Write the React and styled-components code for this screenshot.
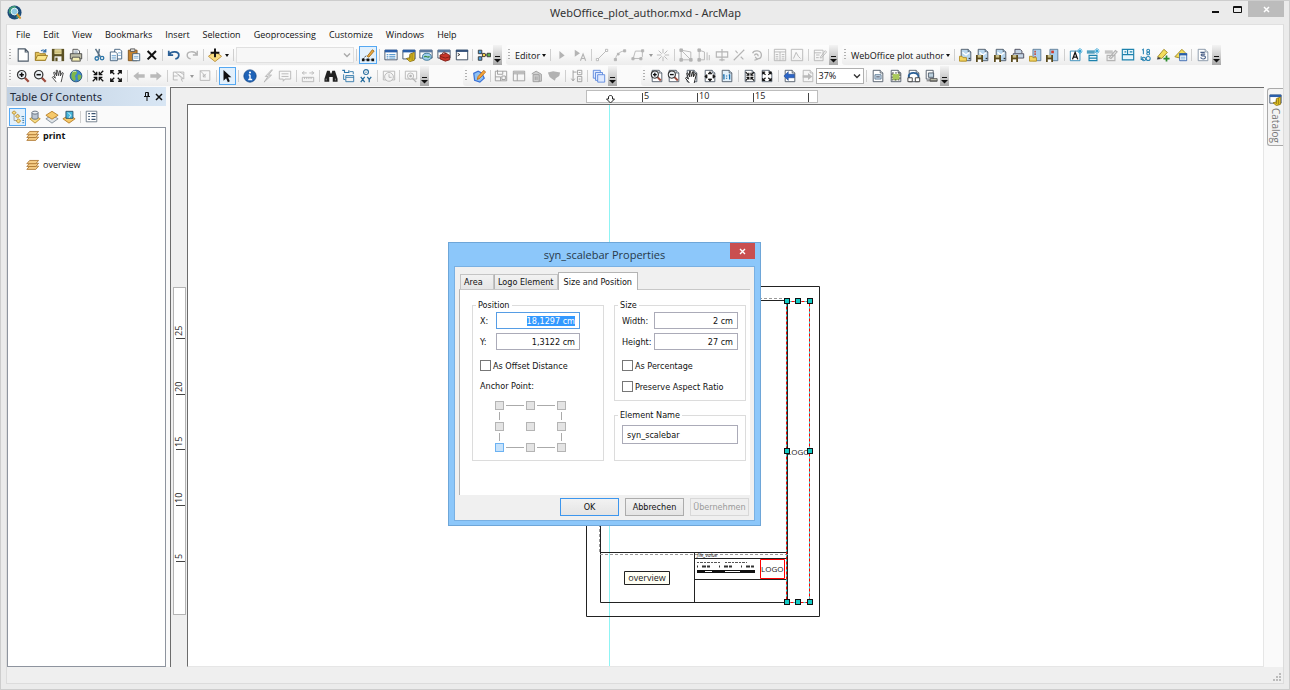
import React, { useEffect, useRef, useState } from "react";
import styled, { createGlobalStyle, css } from "styled-components";

const GlobalStyle = createGlobalStyle`
  * {
    box-sizing: border-box;
  }
  body {
    margin: 0;
    font-family: "Open Sans", "Noto Sans", sans-serif;
    font-size: 9px;
    color: #111;
  }
  button, input, select {
    font: inherit;
    color: inherit;
    margin: 0;
  }
`;

const dialogFont = `"DejaVu Sans Condensed", "DejaVu Sans", sans-serif`;

/* ---------- icons (16 x 16) ---------- */

const G = "#b4b4b4";
const sheet = "M2.5 1.5h8l3 3v10h-11z";

function Sheet({ stroke = "#4a5663", fill = "#fff" }) {
  return (
    <g fill={fill} stroke={stroke}>
      <path d={sheet} />
      <path d="M10.5 1.5v3h3" />
    </g>
  );
}

function Lens({ children, ink = "#333", glass = "#eef3f7", grip = "#9c4a3c" }) {
  return (
    <g>
      <path d="M10 10l4.5 4.5" stroke={grip} strokeWidth="2.6" />
      <circle cx="6.5" cy="6.5" r="4.8" fill={glass} stroke={ink} strokeWidth="1.4" />
      <g stroke="#111" strokeWidth="1.8">{children}</g>
    </g>
  );
}

function Disk() {
  return (
    <g>
      <path d="M0 8h8v8H0z" fill="#5a4a1c" />
      <path d="M2 8h4v3H2z" fill="#c9bd86" />
      <path d="M2 13h4v3H2z" fill="#fff" />
    </g>
  );
}

function Folder() {
  return <path d="M.5 9.500h3l1 1.500h4v4h-8z" fill="#f3d560" stroke="#b08a1e" />;
}

function Cells({ ink = "#333" }) {
  return (
    <g fill="none" stroke={ink}>
      <path d="M1.500 2.500h13v11h-13zM1.500 5.500h13M6 5.500v8" />
    </g>
  );
}

const arrowsIn = "M2 2l4 4M3 6.500h3.500V3M14 2l-4 4M13 6.500H9.500V3M2 14l4-4M3 9.500h3.500V13M14 14l-4-4M13 9.500H9.500V13";
const arrowsOut = "M6 6L2 2M2 5.500V2h3.500M10 6l4-4M14 5.500V2h-3.500M6 10l-4 4M2 10.500V14h3.500M10 10l4 4M14 10.500V14h-3.500";
const hand = "M6 15L1.500 9.500l1-1L5 10.500 3 4l1.200-.5L6.500 8 6 1.500h1.300L8.500 7.500 9.800 2l1.200.2-.4 5.800L12.800 4l1.200.6L12.500 11 11.500 15";

const icons = {
  new: <path d="M2.500 1h8l3.500 3.500V15h-11.500zM10.500 1v3.500H14" fill="#fff" stroke="#4c5a68" strokeWidth="1.2" />,
  open: (
    <g stroke="#96741c">
      <path d="M1.500 14V5h4l1.500 1.500h6V14z" fill="#e3c35a" />
      <path d="M1.500 14l2.500-5.500h11.500L13 14z" fill="#fbe68c" />
      <path d="M8 3.500c2-2 4-1.500 5 .5M13.500 1v3.500H10" fill="none" stroke="#2f6aa5" strokeWidth="1.3" />
    </g>
  ),
  save: (
    <g>
      <path d="M1 1h14v14H1z" fill="#5b5124" />
      <path d="M4 1.500h8V7H4z" fill="#efe6b6" />
      <path d="M4 9.500h8V15H4z" fill="#f5f5f5" />
      <path d="M5 11h2.500v4H5z" fill="#5b5124" />
      <path d="M4 3.500h8M4 5.500h8" stroke="#b8a855" />
    </g>
  ),
  print: (
    <g stroke="#444">
      <path d="M4.500 7V1.500h5.500l2 2V7" fill="#fff" />
      <path d="M1.500 6.500h13v6h-13z" fill="#bdbda8" />
      <path d="M4 10.500h8l1 4.500H3z" fill="#f6efb4" />
      <path d="M6 3.500h4M6 5.500h4" stroke="#8899aa" />
    </g>
  ),
  cut: (
    <g fill="none">
      <path d="M4 1l5.500 9M8.500 1L7 10" stroke="#5c7386" strokeWidth="1.7" />
      <circle cx="5.500" cy="12" r="2" stroke="#2a75a8" strokeWidth="1.5" />
      <circle cx="11.500" cy="11.500" r="2" stroke="#2a75a8" strokeWidth="1.5" />
    </g>
  ),
  copy: (
    <g fill="#fff" stroke="#3c5a78">
      <path d="M6.500 1.500h6l2 2v9h-8z" />
      <path d="M1.500 4.500h6l2 2v8h-8z" />
      <path d="M3 8.500h5M3 10.500h5M3 12.500h5M10.500 5.500h3M10.500 8.500h3" stroke="#6ba3d0" />
    </g>
  ),
  paste: (
    <g>
      <path d="M1.500 2.500h10v12h-10z" fill="#c4822e" stroke="#7c501a" />
      <path d="M4 1h5v3H4z" fill="#dcdcdc" stroke="#555" />
      <path d="M6.500 6.500h8v8h-8z" fill="#fff" stroke="#3c5a78" />
      <path d="M8 9.500h5M8 11.500h5" stroke="#6ba3d0" />
    </g>
  ),
  remove: <path d="M3 3.500l9.500 9.500M12.500 3.500L3 13" stroke="#111" strokeWidth="2.4" />,
  undo: <path d="M2 3v5h5M2.500 7.500C5 3 13.500 3.500 13.500 8c0 2.500-1.500 4-4 4.500" fill="none" stroke="#2a5f96" strokeWidth="2" />,
  redo: <path d="M14 3v5H9M13.500 7.500C11 3 2.500 3.500 2.500 8c0 2.500 1.500 4 4 4.500" fill="none" stroke={G} strokeWidth="1.600" />,
  add: (
    <g>
      <path d="M8 3.500l7.500 6L8 15.500.5 9.500z" fill="#f7dc82" stroke="#b98a30" />
      <path d="M8 .5v10M3 5.500h10" stroke="#111" strokeWidth="2.200" />
    </g>
  ),
  editorTools: (
    <g>
      <path d="M2.500 12.500L6 8.500M2 13.500h12" stroke="#333" strokeDasharray="2 1" />
      <path d="M7 9.500l6-7.500 2 1.500-6 7z" fill="#f0a83c" stroke="#9b6d1a" />
      <path d="M1 12h3v3H1zM6.500 12h3v3h-3zM12 12h3v3h-3z" fill="#111" />
    </g>
  ),
  table: (
    <g>
      <path d="M1 2.500h14v11H1z" fill="#fff" stroke="#3a4c63" />
      <path d="M1 2h14v3H1z" fill="#2a5ea9" />
      <path d="M3 7.500h2M6 7.500h7M3 9.500h2M6 9.500h7M3 11.500h2M6 11.500h7" stroke="#3b86c5" />
    </g>
  ),
  catalog: (
    <g>
      <path d="M1 2.500h14v10H1z" fill="#fff" stroke="#3a4c63" />
      <path d="M1 2h14v3H1z" fill="#2a5ea9" />
      <path d="M5 12l4-1V7l5-2v9l-5 1.500z" fill="#e4c422" stroke="#8a7010" />
      <path d="M9 8.500v5M11.500 6v8" stroke="#8a7010" />
    </g>
  ),
  search: (
    <g>
      <path d="M1 2.500h14v9H1z" fill="#fff" stroke="#3a4c63" />
      <path d="M1 2h14v3H1z" fill="#5a78a0" />
      <ellipse cx="9" cy="10" rx="5" ry="4" fill="#9fd0ee" stroke="#2f6b90" />
      <path d="M6 10.500c2-3 4 2 6-1" stroke="#3d8b3d" strokeWidth="1.5" fill="none" />
    </g>
  ),
  toolbox: (
    <g>
      <path d="M1 2.500h14v9H1z" fill="#fff" stroke="#3a4c63" />
      <path d="M1 2h14v3H1z" fill="#5a78a0" />
      <path d="M3.500 8l7-2 4 2.500v5l-5 1.500-6-2.500z" fill="#c8352a" stroke="#7c1b14" />
      <path d="M6 7c0-2.500 4-3 4-.5M3.500 9.500l6 2 5-1.500" fill="none" stroke="#7c1b14" />
    </g>
  ),
  python: (
    <g>
      <path d="M1.500 2.500h13v11h-13z" fill="#fff" stroke="#2c3d52" />
      <path d="M1 2h14v2.500H1z" fill="#33507a" />
      <path d="M3 6l2.500 1.500L3 9" fill="none" stroke="#222" />
    </g>
  ),
  model: (
    <g stroke="#333">
      <path d="M4 4.500l4 3.500h4M4 12l4-4" fill="none" />
      <path d="M1.500 2.500h4v4h-4zM1.500 10h4v4h-4z" fill="#4ea0dc" />
      <circle cx="8" cy="8" r="2" fill="#f3d24a" />
      <path d="M11.500 6h4v4h-4z" fill="#5cb050" />
    </g>
  ),
  editArrow: <path d="M5 3.500l6 5-6 4z" fill={G} />,
  editArrowA: (
    <g>
      <path d="M2 2l6 4-6 4z" fill={G} />
      <path d="M8.500 14.500L11.500 7l3 7.500M9.500 12h4" fill="none" stroke={G} strokeWidth="1.3" />
    </g>
  ),
  line: (
    <g fill="#fff" stroke={G}>
      <path d="M3 13L13 3" />
      <path d="M1.500 12h2.500v2.500H1.500zM12 1.500h2.500V4H12z" />
    </g>
  ),
  arc: (
    <g fill="none" stroke={G}>
      <path d="M3 13C3 8 8 3.500 13 3.500" />
      <path d="M1.500 12h2.500v2.500H1.500zM12 2h2.500v2.500H12zM5 6h2v2H5z" fill={G} />
    </g>
  ),
  polygon: (
    <g fill="none" stroke={G}>
      <path d="M2.500 12L5 3.500h8V10l-2 2z" />
      <path d="M12 2h2.500v2.500H12zM1 11h2.500v2.500H1zM10 11h2.500v2.500H10z" fill={G} />
    </g>
  ),
  burst: <path d="M8 1v5M8 10v5M1 8h5M10 8h5M3 3l3.500 3.500M13 3L9.500 6.500M3 13l3.500-3.500M13 13L9.500 9.500" stroke={G} />,
  vertices: (
    <g fill="none" stroke={G}>
      <path d="M2.500 2.500v11h11v-9zM2.500 2.500l11 11" />
      <path d="M1 1h3v3H1zM1 12h3v3H1zM12 12h3v3h-3z" fill={G} />
    </g>
  ),
  reshape: (
    <g fill="none" stroke={G}>
      <path d="M2.500 2.500v11h6v-9zM11.500 5v9M14 8v6" />
      <path d="M1 1h3v3H1zM1 12h3v3H1z" fill={G} />
    </g>
  ),
  cutPolygon: <path d="M1.500 4.500h13v6h-13zM8 1v14M5 13.500h6" fill="none" stroke={G} strokeWidth="1.300" />,
  split: <path d="M2 14L14 2M4 3l2.500 3M10 10l3 3" stroke={G} strokeWidth="1.300" />,
  rotate: <path d="M3 6c1-4 10-4 10 2 0 3-2.500 4.500-5 4.500M5 8.500c1-2.500 5-2 4 1M6 10l2 3-3 1" fill="none" stroke={G} strokeWidth="1.500" />,
  attributes: <path d="M1.500 1.500h13v13h-13zM1.500 4.500h13M8 4.500v10M3 7.500h3M3 10h3M3 12.500h3M10 7.500h3M10 10h3M10 12.500h3" fill="none" stroke={G} />,
  sketchProps: <path d="M1.500 1.500h13v13h-13zM4 12l3-7 2.500 4.500L12 12" fill="none" stroke={G} />,
  template: <path d="M1.500 2.500h10v12h-10zM1.500 5.500h8M3.500 8h4M3.500 11h3M8 11l6-8 1.500 1.500-6 7z" fill="none" stroke={G} />,
  zoomIn: <Lens><path d="M6.500 4v5M4 6.500h5" /></Lens>,
  zoomOut: <Lens><path d="M4 6.500h5" /></Lens>,
  pan: <path d={hand} fill="#fff" stroke="#333" />,
  globe: (
    <g>
      <circle cx="8" cy="8" r="6.700" fill="#3f87c9" stroke="#24507c" />
      <path d="M4 3c3-1.500 6-1 5 1.500S6 7.500 7 9s1 4-1 4.500C3 12 1.500 8 4 3zM11 6l3 1.500c.5 3-1.500 5-3 5.500-1-2-2-5 0-7z" fill="#7fb84a" />
      <path d="M4 3.500c2-1.500 4-1 4 0" stroke="#e9f5d4" fill="none" />
    </g>
  ),
  arrowsIn: <path d={arrowsIn} fill="none" stroke="#111" strokeWidth="1.500" />,
  arrowsOut: <path d={arrowsOut} fill="none" stroke="#111" strokeWidth="1.500" />,
  back: <path d="M1.500 8l6-5v3h7v4h-7v3z" fill="#bababa" />,
  forward: <path d="M14.500 8l-6-5v3h-7v4h7v3z" fill="#bababa" />,
  selectFeatures: (
    <g fill="none" stroke={G}>
      <path d="M1.500 3.500h12v8M1.500 3.500v9h5M4 3.500l6 6M9 3.500l4.500 3M1.500 8h5" />
      <path d="M7 6l6 5-2.500.5 1.500 3" fill="#ddd" />
    </g>
  ),
  clearSelection: <path d="M2.500 2h11v11h-11zM2.500 2l6 6M9 5.500L6 9M6 6v3h3" fill="none" stroke={G} />,
  pointer: <path d="M4 1v12.500l3-3 2 4.500 2.200-1-2-4.500H13z" fill="#111" />,
  info: (
    <g>
      <circle cx="8" cy="8" r="7" fill="#1e63b8" stroke="#164a8c" />
      <path d="M8 6.500V12M6.500 6.800H8M6 12h4.500" stroke="#fff" strokeWidth="1.600" />
      <circle cx="8" cy="4" r="1.200" fill="#fff" />
    </g>
  ),
  lightning: <path d="M12 1L5 8.500h3L3.500 15 12 7H8.500L13 1z" fill="#e4e4e4" stroke={G} />,
  popup: <path d="M1.500 2.500h13v9H8L6 14v-2.500H1.500zM4 5.500h8M4 8.500h8" fill="none" stroke={G} />,
  measure: <path d="M1.500 9.500h13v5h-13zM4 9.500v2M6.500 9.500v2M9 9.500v2M11.500 9.500v2M1.500 4.500h5M9.500 4.500h5M3.500 2.500l-2 2 2 2M12.500 2.500l2 2-2 2" fill="none" stroke={G} />,
  find: (
    <g fill="#222">
      <path d="M3.500 2h3l1 3h1l1-3h3l3 9v3.500H10V9H6v5.500H.5V11z" />
      <path d="M2.500 11v2M13 11v2" stroke="#999" />
    </g>
  ),
  route: (
    <g fill="none" stroke="#2a75a8">
      <path d="M4 4h5V1.500M1.500 1.500h2.500v3" strokeWidth="1.300" />
      <path d="M5.500 7.500h9v7h-9zM5.500 9.500h9M3 6v6h2" />
      <path d="M10 3h4v3" />
    </g>
  ),
  goToXY: (
    <g fill="none" stroke="#2a6f9f">
      <circle cx="8" cy="3.500" r="2.800" strokeWidth="1.300" />
      <path d="M8 3v1.500" />
      <path d="M2 9l4.500 6M6.500 9L2 15M9.500 9l2.200 3L14 9M11.700 12v3" strokeWidth="1.500" />
    </g>
  ),
  time: (
    <g fill="none" stroke={G}>
      <path d="M1.500 2.500h13v10h-13z" />
      <circle cx="8" cy="9" r="5" fill="#f4f4f4" />
      <path d="M8 6v3.500h3" />
    </g>
  ),
  viewer: (
    <g fill="none" stroke={G}>
      <path d="M1.500 2.500h13v9h-13z" />
      <circle cx="7.500" cy="8" r="3.500" fill="#f4f4f4" />
      <path d="M10 11l4 4M6 8h3M7.500 6.500v3" strokeWidth="1.600" />
    </g>
  ),
  mapEdit: (
    <g>
      <path d="M2 5l5-2.500 4 2 3 6-5 4.500-6-2z" fill="#8fc1f2" stroke="#3b72d8" strokeWidth="1.400" />
      <path d="M6 12l1-3.500 6.500-7 2 2-6.500 7z" fill="#f5a73a" stroke="#c06a14" />
    </g>
  ),
  pageCells: <path d="M1.500 2.500h13v11h-13zM4 1v5h6V2.500M1.500 9h6v4.500M9 8h4v4H9z" fill="none" stroke="#999" />,
  pageTable: <g><Cells ink="#999" /><path d="M2 3h12v2H2z" fill="#bbb" /></g>,
  grayBin: <path d="M3.500 6.500h7v8h-7zM2 5.500l5-3 6 3.500v8h-3M6 8.500v4M8 8.500v4" fill="#d0d0d0" stroke="#999" />,
  grayMap: <path d="M1 4l6-1.500L15 4l-1 4-4 2.500-1 3-3-2L3 9z" fill="#b2b2b2" />,
  sortPages: <path d="M3.500 1.500v12M1.500 11l2 2.500 2-2.500M3.500 3.500h4M8.500 1.500h5v5h-5zM8.500 8.500h5v6h-5zM10 4h2M10 11.500h2" fill="none" stroke="#999" />,
  stack: (
    <g fill="#dfeaff" stroke="#5a86dc">
      <path d="M1.500 1.500h8v9h-8z" />
      <path d="M4 4h8v9H4z" />
      <path d="M6.500 6.500h8v8.500h-8z" />
    </g>
  ),
  pageZoomIn: <g><Sheet /><g transform="scale(.85) translate(0 1)"><Lens><path d="M6.500 4v5M4 6.500h5" /></Lens></g></g>,
  pageZoomOut: <g><Sheet /><g transform="scale(.85) translate(0 1)"><Lens><path d="M4 6.500h5" /></Lens></g></g>,
  pagePan: <g><Sheet /><g transform="translate(-1 1)"><path d={hand} fill="#fff" stroke="#222" strokeWidth="1.100" /></g></g>,
  pageWhole: <g><Sheet /><path d="M8 3l2 2.500H6zM8 14l2-2.500H6zM2 8.500l2.500-2v4zM14 8.500l-2.500-2v4z" fill="#111" stroke="#111" /></g>,
  pageOne: <g><Sheet fill="#e4f1fb" /><path d="M4.500 6v6M3.500 7h1M11 6v6M10 7h1M7.500 7.500v1M7.500 10v1" stroke="#1b6fae" strokeWidth="1.500" /></g>,
  pageIn: <g><Sheet /><g transform="translate(1.500 2) scale(.8)"><path d={arrowsIn} fill="none" stroke="#111" strokeWidth="1.600" /></g></g>,
  pageOut: <g><Sheet /><g transform="translate(1.500 2) scale(.8)"><path d={arrowsOut} fill="none" stroke="#111" strokeWidth="1.600" /></g></g>,
  pageBack: <g><Sheet /><path d="M1 8l5-5v3h7v4H6v3z" fill="#2c66c8" stroke="#173f86" strokeWidth=".6" /></g>,
  pageForward: <g><Sheet stroke={G} fill="#f6f6f6" /><path d="M13 8.500l-5-4v2.500H2v3h6v2.500z" fill="#bababa" /></g>,
  draft: <g><Sheet /><path d="M4.500 6.500h7v5h-7z" fill="#cfe0ef" stroke="#5b7894" /><path d="M6 9h4" stroke="#334" /></g>,
  focusFrame: <g><Sheet /><path d="M4 5l4 1 4-1v7l-5 1-3-1z" fill="#a9c85a" /><path d="M3.500 4.500h9v8h-9z" fill="none" stroke="#333" strokeDasharray="2 1.500" /></g>,
  layoutSwap: <g><Sheet /><path d="M2 10V7.500C3 3.500 11 3 13 7.500V10" fill="none" stroke="#2a5f96" strokeWidth="2" /><path d="M1 10h5v4.500H1zM9.500 10h5v4.500h-5z" fill="#fff" stroke="#333" /></g>,
  pages: <g><path d="M2.500 1.500h8v10h-8z" fill="#fff" stroke="#4a5663" /><path d="M5 4.500h6v5H5z" fill="#bcd0dd" stroke="#4a5663" /><path d="M3 13.500h12M7 11h8v3H7z" fill="#c7c7b2" stroke="#555" /></g>,
  plotOpen: <g><Sheet fill="#b9d7ee" /><path d="M4 5l4 3 4-3" stroke="#fff" strokeWidth="1.500" fill="none" /><path d="M11 12h2" stroke="#333" strokeWidth="1.500" /><Folder /></g>,
  plotSave: <g><Sheet fill="#b9d7ee" /><path d="M4 5l4 3 4-3" stroke="#fff" strokeWidth="1.500" fill="none" /><path d="M11 12h2" stroke="#333" strokeWidth="1.500" /><Disk /></g>,
  plotPrint: <g><path d="M4.500 6V1.500h6l2 2V6M2.500 6.500h12v5h-12z" fill="#c4d4e4" stroke="#445" /><Disk /></g>,
  legendOpen: <g><path d="M4.500 1.500h9v13h-9z" fill="#a9d0ef" stroke="#5d7a96" /><path d="M7 3v7" stroke="#c8584a" strokeWidth="2" strokeDasharray="2 1" /><Folder /></g>,
  legendSave: <g><path d="M4.500 1.500h9v13h-9z" fill="#a9d0ef" stroke="#5d7a96" /><path d="M6 4.500h3" stroke="#d23a2a" strokeWidth="3" /><Disk /></g>,
  textNew: <g><path d="M1.500 3.500h11v11h-11z" fill="#fff" stroke="#2a85b4" /><path d="M4 13l3-8 3 8M5 10.500h4" fill="none" stroke="#111" strokeWidth="1.500" /><path d="M12.500 0v7M9.500 3.500h6M10.500 1.500l4 4M14.500 1.500l-4 4" stroke="#2a9fd4" /></g>,
  rowsNew: <g><path d="M1 3.500h9M1 5.500h9M3.500 8.500h9v6h-9zM3.500 11.500h9" fill="#e8f6fc" stroke="#1d82ad" strokeWidth="1.300" /><path d="M12.500 0v7M9.500 3.500h6M10.500 1.500l4 4M14.500 1.500l-4 4" stroke="#2a9fd4" /></g>,
  rowsEdit: <path d="M1 3.500h9M1 5.500h9M3.500 8.500h9v6h-9zM6 11l7-8 2 1.500-7 7.500z" fill="#eee" stroke={G} strokeWidth="1.300" />,
  window: <g fill="#e8f6fc" stroke="#1d82ad" strokeWidth="1.300"><path d="M1.500 1.500h13v12h-13z" /><path d="M1.500 7.500h13M4 4.500h2M7.500 2v5.500M10 4.500h3" fill="none" /></g>,
  digits: <g fill="none" stroke="#2a85b4" strokeWidth="1.200"><path d="M3.500 2.500l1.500-1v5.500M2.500 9.500v3.500h3" /><circle cx="10.500" cy="3" r="1.600" /><circle cx="10.500" cy="6.300" r="1.600" /><circle cx="5.500" cy="12.500" r="2" /><circle cx="10.500" cy="12" r="2.300" /></g>,
  paintAdd: <g><path d="M2 10l7-8.500 4 3.500-6.500 7z" fill="#f2dd5e" stroke="#9c8420" /><path d="M1 13l1-3 4 2.500z" fill="#444" /><path d="M12 8.500v7M8.500 12h7" stroke="#2b8a2b" strokeWidth="2" /></g>,
  paintList: <g><path d="M1 10l8-8.500 4 4-6 6z" fill="#f2dd5e" stroke="#9c8420" /><path d="M6.500 6.500h8v8h-8z" fill="#fff" stroke="#2a5ea9" /><path d="M6 6h9v2.500H6z" fill="#2a5ea9" /><path d="M8 10.500h5M8 12.500h5" stroke="#6ba3d0" /></g>,
  refresh: <g><Sheet stroke="#8090a2" /><path d="M5 5h5M10.500 7H7c-1.500 0-1.500 2 0 2h2c2.500 0 2.500 3.500-.5 3.500-2 0-3-1-3-2" fill="none" stroke="#4a5f86" strokeWidth="1.200" /></g>,
  drawingOrder: (
    <g fill="#f7dc86" stroke="#b88a2c">
      <path d="M3.500 4v8h4M7 5l2 1" fill="none" stroke="#999" />
      <path d="M1 3l2.500-2L6 3 3.500 5zM5 7l2.500-2L10 7 7.500 9zM6 12.500L8.500 10l2.500 2.500L8.500 15z" />
      <path d="M12 7.500h3M13 10h2M13 12h2M13 14.500h2" stroke="#2a75a8" />
    </g>
  ),
  source: (
    <g>
      <path d="M2 10l6-3 6 3-6 5z" fill="#f7dc86" stroke="#b88a2c" />
      <path d="M4.500 3v6c0 2 7 2 7 0V3" fill="#bcc6d2" stroke="#5b6878" />
      <ellipse cx="8" cy="3" rx="3.500" ry="1.700" fill="#eef2f6" stroke="#5b6878" />
    </g>
  ),
  visibility: (
    <g>
      <path d="M1 10l7-4 7 4-7 5z" fill="#dfe4e8" stroke="#7e8a96" />
      <path d="M1 6l7-4.500L15 6l-7 4.500z" fill="#f6c96a" stroke="#b57b26" />
    </g>
  ),
  selection: (
    <g>
      <path d="M1 10l7-4 7 4-7 5z" fill="#f6c96a" stroke="#b57b26" />
      <path d="M4.500 1.500h8v8h-8z" fill="#49b8dc" stroke="#224d66" />
      <path d="M7 3l3 3-2 3" stroke="#fff" fill="none" />
    </g>
  ),
  options: (
    <g>
      <path d="M1.500 1.500h13v13h-13z" fill="#fff" stroke="#5b6b7b" />
      <path d="M4 4.500h2M8 4.500h5M4 8h2M8 8h5M4 11.500h2M8 11.500h5" stroke="#37516e" strokeWidth="1.400" />
    </g>
  ),
  layers: (
    <g fill="#f6cd86" stroke="#a8702a">
      <path d="M1 14L4.500 10h11L12 14z" />
      <path d="M1 10.500L4.500 6.500h11L12 10.500z" />
      <path d="M1 7L4.500 3h11L12 7z" />
    </g>
  ),
  app: (
    <g>
      <circle cx="8" cy="8" r="7.500" fill="#1b4a78" />
      <path d="M3 3c3-2.500 6-2 7-1L6 6l-3 4C1.500 8 1.500 5 3 3zM10 12l4-3c-.5 3-2 5-4 5.500z" fill="#3f9a7a" />
      <circle cx="8" cy="7" r="3.600" fill="#8cc8e0" stroke="#e8f6fa" />
      <path d="M10.500 9.500l4 5" stroke="#d8942c" strokeWidth="2" />
    </g>
  ),
};

const Svg = styled.svg`
  display: block;
  flex: none;
  fill: none;
`;

function Icon({ name, size = 14 }) {
  return (
    <Svg width={size} height={size} viewBox="0 0 16 16" aria-hidden="true">
      {icons[name]}
    </Svg>
  );
}

/* ---------- main window ---------- */

const Frame = styled.div`
  position: relative;
  display: flex;
  flex-direction: column;
  min-height: 100vh;
  padding: 0 5px 5px;
  background: #ebebeb;
  border: 1px solid #cdcdcd;
  overflow: hidden;
`;

const TitleBar = styled.header`
  display: grid;
  grid-template-columns: 1fr auto 1fr;
  align-items: center;
  height: 23px;
  padding-left: 1px;
`;

const Title = styled.h1`
  margin: 0;
  font-family: "Noto Sans", "Open Sans", sans-serif;
  font-size: 11px;
  font-weight: 400;
  color: #333;
`;

const WindowButtons = styled.div`
  display: flex;
  align-self: start;
  justify-content: flex-end;
`;

const WindowButton = styled.button`
  display: flex;
  align-items: center;
  justify-content: center;
  width: ${(props) => (props.$close ? "36px" : "22px")};
  height: 16px;
  padding: 0;
  border: 0;
  color: ${(props) => (props.$close ? "#fff" : "#111")};
  background: ${(props) => (props.$close ? "#bcbcbc" : "transparent")};
`;

const Shell = styled.div`
  flex: 1;
  display: flex;
  flex-direction: column;
  background: #fafafa;
  border: 1px solid #dcdcdc;
  border-top-color: #e0e0e0;
`;

const MenuBar = styled.nav`
  display: flex;
  gap: 13px;
  height: 20px;
  padding: 0 9px 2px;
`;

const MenuItem = styled.button`
  padding: 0;
  border: 0;
  background: none;
  font-size: 9px;
  white-space: nowrap;
`;

const ToolRow = styled.div`
  display: flex;
  gap: ${(props) => props.$gap}px;
  height: 21px;
`;

const Toolbar = styled.div`
  display: flex;
  align-items: center;
  flex: none;
  width: ${(props) => props.$width}px;
  height: 20px;
  background: linear-gradient(#fdfdfd, #f8f8f8 50%, #ececec);
  border-radius: 3px 0 0 3px;
`;

const Grip = styled.span`
  flex: none;
  width: 2px;
  height: 12px;
  margin: 0 3px 0 2px;
  background: repeating-linear-gradient(#b0b0b0 0 1px, transparent 1px 3px);
`;

const Divider = styled.span`
  flex: none;
  width: 1px;
  height: 12px;
  margin: 0 2px;
  background: #cfcfcf;
`;

const Tool = styled.button`
  display: flex;
  align-items: center;
  justify-content: center;
  flex: 1 1 18px;
  min-width: 0;
  height: 18px;
  padding: 0;
  background: none;
  border: 1px solid transparent;
  ${(props) =>
    props.$active &&
    css`
      background: #e2f0fc;
      border-color: #55a8f2;
    `}
`;

const Drop = styled.button`
  flex: none;
  display: flex;
  align-items: center;
  justify-content: center;
  gap: 2px;
  min-width: 8px;
  padding: 0 ${(props) => (props.$labelled ? "2px" : "0")};
  border: 0;
  background: none;
  font-size: 9px;
  white-space: nowrap;
  color: ${(props) => (props.$muted ? "#999" : "#111")};
  &::after {
    content: "";
    border: 2px solid transparent;
    border-top: 3px solid currentColor;
    border-bottom: 0;
  }
`;

const More = styled.button`
  flex: none;
  display: flex;
  align-items: flex-end;
  justify-content: center;
  align-self: stretch;
  width: 9px;
  padding: 0 0 2px;
  border: 0;
  background: linear-gradient(#f4f4f4, #d0d0d0 50%, #a8a8a8);
`;

const SelectBox = styled.span`
  flex: none;
  display: flex;
  align-items: center;
  position: relative;
  width: ${(props) => props.$width}px;
  height: 16px;
  background: ${(props) => (props.$muted ? "#f7f7f7" : "#fff")};
  border: 1px solid ${(props) => (props.$muted ? "#e0e0e0" : "#b0b0b0")};
  select {
    appearance: none;
    width: 100%;
    padding: 0 1px;
    border: 0;
    background: none;
    font-size: 9px;
    line-height: 14px;
  }
  svg {
    position: absolute;
    right: 2px;
    pointer-events: none;
  }
`;

function Chevron({ color }) {
  return (
    <Svg width="8" height="8" viewBox="0 0 8 8">
      <path d="M1 2.500l3 3 3-3" stroke={color} strokeWidth="1.400" />
    </Svg>
  );
}

function Overflow() {
  return (
    <More aria-label="Toolbar options">
      <Svg width="7" height="7" viewBox="0 0 7 7">
        <path d="M1 .5h5" stroke="#111" />
        <path d="M0 3h7L3.500 6.500z" fill="#111" />
      </Svg>
    </More>
  );
}

const scaleSelect = (
  <SelectBox key="zoom" $width={48}>
    <select aria-label="Zoom percent" defaultValue="37%">
      <option>37%</option>
      <option>100%</option>
    </select>
    <Chevron color="#333" />
  </SelectBox>
);

const mapScale = (
  <SelectBox key="scale" $width={118} $muted>
    <select aria-label="Map scale" disabled />
    <Chevron color="#aaa" />
  </SelectBox>
);

// "|" is a divider, "v" a small drop-down arrow and "*" marks a pressed tool
const topRow = [
  {
    width: 495,
    items: ["new", "open", "save", "print", "|", "cut", "copy", "paste", "remove", "|", "undo", "redo", "|", "add", "v", "|", mapScale, "|", "*editorTools", "|", "table", "catalog", "search", "toolbox", "python", "|", "model"],
  },
  {
    width: 332,
    items: [<Drop key="editor" $labelled>Editor</Drop>, "|", "editArrow", "editArrowA", "|", "line", "arc", "polygon", "v-", "burst", "|", "vertices", "reshape", "cutPolygon", "split", "rotate", "|", "attributes", "sketchProps", "|", "template"],
  },
  {
    width: 379,
    items: [<Drop key="plot" $labelled>WebOffice plot author</Drop>, "|", "plotOpen", "plotSave", "plotSave", "plotPrint", "legendOpen", "legendSave", "|", "textNew", "rowsNew", "rowsEdit", "window", "digits", "paintAdd", "paintList", "|", "refresh"],
  },
];

const bottomRow = [
  {
    width: 422,
    items: ["zoomIn", "zoomOut", "pan", "globe", "|", "arrowsIn", "arrowsOut", "|", "back", "forward", "|", "selectFeatures", "v-", "clearSelection", "|", "*pointer", "|", "info", "lightning", "popup", "|", "measure", "|", "find", "route", "goToXY", "|", "time", "|", "viewer"],
  },
  {
    width: 154,
    items: ["mapEdit", "|", "pageCells", "pageTable", "grayBin", "grayMap", "|", "sortPages", "|", "stack"],
  },
  {
    width: 308,
    items: ["pageZoomIn", "pageZoomOut", "pagePan", "pageWhole", "pageOne", "|", "pageIn", "pageOut", "|", "pageBack", "pageForward", scaleSelect, "|", "draft", "focusFrame", "layoutSwap", "pages"],
  },
];

function ToolStrip({ width, items }) {
  return (
    <Toolbar $width={width}>
      <Grip />
      {items.map((item, index) => {
        if (typeof item !== "string") return item;
        if (item === "|") return <Divider key={index} />;
        if (item[0] === "v" && item.length < 3) {
          return <Drop key={index} $muted={item === "v-"} aria-label="More" />;
        }
        const active = item[0] === "*";
        const name = active ? item.slice(1) : item;
        return (
          <Tool key={index} $active={active} aria-label={name}>
            <Icon name={name} />
          </Tool>
        );
      })}
      <Overflow />
    </Toolbar>
  );
}

const Workspace = styled.div`
  flex: 1;
  display: flex;
`;

/* ---------- table of contents ---------- */

const Contents = styled.aside`
  display: flex;
  flex-direction: column;
  flex: none;
  width: 159px;
`;

const PanelHead = styled.div`
  display: flex;
  align-items: center;
  height: 19px;
  padding: 0 1px 0 3px;
  background: linear-gradient(90deg, #c1d0e1, #d8e6f4);
  h2 {
    flex: 1;
    margin: 0;
    font-family: "Noto Sans", "Open Sans", sans-serif;
    font-size: 11px;
    font-weight: 400;
    color: #1f2a38;
  }
`;

const PanelButton = styled.button`
  display: flex;
  justify-content: center;
  width: 12px;
  padding: 0;
  border: 0;
  background: none;
`;

const PanelTools = styled.div`
  display: flex;
  align-items: center;
  width: 93px;
  height: 21px;
  padding-left: 2px;
`;

const Tree = styled.ul`
  flex: 1;
  margin: 0;
  padding: 0 0 0 18px;
  list-style: none;
  background: #fff;
  border: 1px solid #8e949e;
`;

const TreeItem = styled.li`
  display: flex;
  align-items: center;
  gap: 4px;
  height: 15px;
  margin-bottom: 14px;
  font-size: 9px;
  font-weight: ${(props) => (props.$bold ? 700 : 400)};
`;

/* ---------- layout view ---------- */

const LayoutView = styled.main`
  flex: 1;
  display: grid;
  grid-template-columns: 16px 1fr;
  grid-template-rows: 16px 1fr;
  margin-left: 4px;
  background: #efefef;
  border-top: 1px solid #6c6c6c;
  border-left: 1px solid #6c6c6c;
  min-width: 0;
`;

const RulerCorner = styled.span`
  border-bottom: 1px solid #efefef;
`;

const Canvas = styled.div`
  background: #fff;
  border: 1px solid #6c6c6c;
  border-right-color: #e6e6e6;
  border-bottom-color: #e6e6e6;
  overflow: hidden;
  svg {
    width: 100%;
    height: 100%;
  }
`;

const RulerSvg = styled(Svg)`
  width: 100%;
  height: 100%;
  overflow: hidden;
  text {
    font-size: 9px;
    fill: #222;
  }
`;

function HorizontalRuler() {
  return (
    <RulerSvg>
      <rect x="399.5" y="2.5" width="231" height="12" fill="#fff" stroke="#bdbdbd" />
      <path d="M455.5 5v9M510.500 5v9M566.500 5v9M621.500 5v9" stroke="#444" />
      <text x="457" y="11">5</text>
      <text x="512" y="11">10</text>
      <text x="568" y="11">15</text>
      <path d="M421.500 10V9c0-2 4-2 4 0v2h2l-4 4-4-4h2z" fill="#fff" stroke="#222" />
    </RulerSvg>
  );
}

const verticalTicks = [
  [25, 234],
  [20, 290],
  [15, 345],
  [10, 401],
  [5, 457],
];

function VerticalRuler() {
  return (
    <RulerSvg>
      <rect x="2.5" y="183.500" width="12" height="327" fill="#fff" stroke="#b4b4b4" />
      {verticalTicks.map(([label, y]) => (
        <g key={label}>
          <path d={`M5 ${y}.5h9`} stroke="#444" />
          <text transform={`translate(11 ${y - 2}) rotate(-90)`}>{label}</text>
        </g>
      ))}
    </RulerSvg>
  );
}

function MapLayout() {
  const handles = [200, 211, 223].flatMap((x) => [15, 165, 316].map((y) => [x, y]));
  return (
    <Svg>
      <g transform="translate(398 181)">
        <path d="M23.5 -182V1200" stroke="#8ff4f4" />
        <g stroke="#222">
          <path d="M.5 .5h233v330H.5z" />
          <path d="M14.500 14.500h187v302h-187zM14.500 266.500h187M108.500 266v50M108.500 272.500h93M108.500 293.500h93" />
          <path d="M13 12.500h188M13.500 13v255M14 268.500h188" stroke="#999" strokeDasharray="3 2" />
          <path d="M38.500 285.500h45v13h-45z" fill="#fffff4" />
        </g>
        <text x="61" y="295" fontSize="9" textAnchor="middle" fill="#222">overview</text>
        <text x="111" y="271" fontSize="5" fontStyle="italic" fill="#111">file_value</text>
        <path d="M111 276.500h24M139 276.500h22" stroke="#555" strokeDasharray="2 1 3 1" />
        <path d="M111 280.500h58" stroke="#333" strokeWidth="2" strokeDasharray="1 4 4 1 3 9" />
        <path d="M111 285.500h58" stroke="#111" strokeWidth="3" />
        <path d="M119 285.500h7M139 285.500h15" stroke="#fff" />
        <path d="M174.500 273.500h24v19h-24z" fill="#fff" stroke="#ff0000" />
        <text x="175" y="286" fontSize="8" fill="#222">LOGO</text>
        <path d="M200.500 15.500h23v301h-23z" stroke="#20e8e8" />
        <path d="M200.500 15.500h23v301h-23z" stroke="#ff0000" strokeDasharray="3 2" />
        <text x="201" y="169" fontSize="8" fill="#222">LOGO</text>
        <g fill="#12c9c4" stroke="#111">
          {handles
            .filter(([x, y]) => !(x === 211 && y === 165))
            .map(([x, y]) => (
              <rect key={`${x}-${y}`} x={x - 1.5} y={y - 2.5} width="5" height="5" />
            ))}
        </g>
      </g>
    </Svg>
  );
}

const SideStrip = styled.aside`
  flex: none;
  width: 19px;
  padding-top: 1px;
`;

const SideTab = styled.button`
  display: flex;
  align-items: center;
  gap: 2px;
  height: 58px;
  width: 16px;
  margin-left: 3px;
  padding: 4px 0;
  writing-mode: vertical-rl;
  font-size: 10px;
  color: #777;
  background: #f4f4f4;
  border: 1px solid #aaa;
  border-right: 0;
  border-radius: 3px 0 0 3px;
`;

const StatusBar = styled.footer`
  display: flex;
  align-items: flex-end;
  justify-content: flex-end;
  height: 16px;
  padding: 2px;
  background: #efefef;
`;

/* ---------- properties dialog ---------- */

const Dialog = styled.section`
  position: absolute;
  left: 447px;
  top: 241px;
  width: 313px;
  padding: 0 5px 4px;
  font-family: ${dialogFont};
  font-size: 9px;
  background: #8cc7fa;
  border: 1px solid #6ea6d8;
`;

const DialogHead = styled.div`
  display: grid;
  grid-template-columns: 25px 1fr 25px;
  align-items: center;
  height: 23px;
  text-align: center;
  h2 {
    margin: 0;
    font-family: "Open Sans", sans-serif;
    font-size: 11px;
    font-weight: 400;
    color: #27394a;
  }
`;

const DialogClose = styled.button`
  display: flex;
  align-items: center;
  justify-content: center;
  align-self: start;
  width: 25px;
  height: 16px;
  padding: 0;
  border: 0;
  background: #c94f50;
`;

const DialogBody = styled.div`
  padding: 5px 4px 4px;
  background: #f0f0f0;
  border: 1px solid #79b0e2;
`;

const Tabs = styled.div`
  display: flex;
  align-items: flex-end;
  height: 17px;
  padding-left: 1px;
`;

const Tab = styled.button`
  position: relative;
  min-width: 34px;
  height: ${(props) => (props.$active ? "18px" : "15px")};
  margin-bottom: ${(props) => (props.$active ? "-1px" : "0")};
  padding: 0 ${(props) => (props.$active ? "5px" : "3px")};
  text-align: left;
  background: ${(props) => (props.$active ? "#fff" : "linear-gradient(#f2f2f2, #e6e6e6)")};
  border: 1px solid ${(props) => (props.$active ? "#b4b4b4" : "#c4c4c4")};
  border-bottom: 0;
  white-space: nowrap;
  & + & {
    border-left: ${(props) => (props.$active ? "1px solid #b4b4b4" : "0")};
  }
`;

const TabPanel = styled.div`
  display: grid;
  grid-template-columns: 132px 132px;
  gap: 0 10px;
  height: 206px;
  padding: 10px 4px 0 12px;
  background: #fff;
  border-top: 1px solid #c8c8c8;
  border-left: 1px solid #b4b4b4;
  align-content: start;
`;

const Column = styled.div`
  display: flex;
  flex-direction: column;
  justify-content: space-between;
`;

const Group = styled.fieldset`
  min-width: 0;
  height: ${(props) => props.$height}px;
  margin: 0;
  padding: 2px 7px 0;
  border: 1px solid #dcdcdc;
  legend {
    padding: 0 2px;
    margin-left: -4px;
    line-height: 10px;
  }
`;

const Field = styled.label`
  display: flex;
  align-items: center;
  justify-content: space-between;
  height: 17px;
  margin-bottom: 4px;
  padding-right: ${(props) => (props.$inset ? "16px" : "0")};
`;

const TextBox = styled.input`
  width: ${(props) => props.$width || "84px"};
  height: ${(props) => props.$height || 17}px;
  padding: 0 4px;
  text-align: ${(props) => props.$align || "right"};
  background: #fff;
  border: 1px solid #ababb8;
  outline: 0;
  &:focus {
    border-color: #569de5;
  }
  &::selection {
    color: #fff;
    background: #3399ff;
  }
`;

const Checks = styled.div`
  padding-top: 3px;
`;

const Check = styled.label`
  display: flex;
  align-items: center;
  gap: 2px;
  height: 17px;
  margin-bottom: 4px;
  white-space: nowrap;
  input {
    appearance: none;
    flex: none;
    width: 11px;
    height: 11px;
    background: #fff;
    border: 1px solid #777;
  }
  input:checked {
    background: #3399ff;
  }
`;

const AnchorLabel = styled.p`
  margin: 0 0 6px;
  line-height: 17px;
`;

const AnchorGrid = styled.div`
  display: grid;
  grid-template-columns: repeat(3, 9px);
  justify-content: space-between;
  row-gap: 12px;
  width: 71px;
  margin-left: 15px;
  background: linear-gradient(#aaa, #aaa) 4px 4px / 62px 1px no-repeat,
    linear-gradient(#aaa, #aaa) 4px 46px / 62px 1px no-repeat,
    linear-gradient(#aaa, #aaa) 4px 4px / 1px 42px no-repeat,
    linear-gradient(#aaa, #aaa) 66px 4px / 1px 42px no-repeat;
  input {
    appearance: none;
    width: 9px;
    height: 9px;
    margin: 0;
    background: #e4e4e4;
    border: 1px solid #b4b4b4;
    outline: 2px solid #fff;
  }
  input:checked {
    background: #c6e2fb;
    border-color: #6cb2f2;
  }
`;

const Actions = styled.div`
  display: flex;
  justify-content: flex-end;
  gap: 6px;
  padding: 3px 1px 0;
`;

const Action = styled.button`
  width: 59px;
  height: 18px;
  padding: 0;
  background: linear-gradient(#f2f2f2, #e4e4e4);
  border: 1px solid ${(props) => (props.$primary ? "#3c96ee" : "#acacac")};
  &:disabled {
    color: #9a9a9a;
    background: #efefef;
    border-color: #d8d8d8;
  }
`;

const anchors = ["tl", "tc", "tr", "ml", "mc", "mr", "bl", "bc", "br"];

function PropertiesDialog() {
  const [anchor, setAnchor] = useState("bl");
  const xField = useRef(null);

  useEffect(() => {
    xField.current?.focus();
    xField.current?.select();
  }, []);

  return (
    <Dialog role="dialog" aria-labelledby="dialog-title">
      <DialogHead>
        <span />
        <h2 id="dialog-title">syn_scalebar Properties</h2>
        <DialogClose aria-label="Close dialog">
          <Svg width="7" height="7" viewBox="0 0 7 7">
            <path d="M1 1l5 5M6 1L1 6" stroke="#fff" strokeWidth="1.400" />
          </Svg>
        </DialogClose>
      </DialogHead>
      <DialogBody>
        <Tabs>
          <Tab>Area</Tab>
          <Tab>Logo Element</Tab>
          <Tab $active>Size and Position</Tab>
        </Tabs>
        <TabPanel>
          <Group $height={161}>
            <legend>Position</legend>
            <Field $inset>
              X:
              <TextBox ref={xField} defaultValue="18,1297 cm" />
            </Field>
            <Field $inset>
              Y:
              <TextBox defaultValue="1,3122 cm" />
            </Field>
            <Checks>
              <Check>
                <input type="checkbox" />
                As Offset Distance
              </Check>
            </Checks>
            <AnchorLabel>Anchor Point:</AnchorLabel>
            <AnchorGrid>
              {anchors.map((id) => (
                <input
                  key={id}
                  type="radio"
                  name="anchor"
                  aria-label={`Anchor ${id}`}
                  checked={anchor === id}
                  onChange={() => setAnchor(id)}
                />
              ))}
            </AnchorGrid>
          </Group>
          <Column>
            <Group $height={101}>
              <legend>Size</legend>
              <Field>
                Width:
                <TextBox defaultValue="2 cm" />
              </Field>
              <Field>
                Height:
                <TextBox defaultValue="27 cm" />
              </Field>
              <Checks>
                <Check>
                  <input type="checkbox" />
                  As Percentage
                </Check>
                <Check>
                  <input type="checkbox" />
                  Preserve Aspect Ratio
                </Check>
              </Checks>
            </Group>
            <Group $height={51}>
              <legend>Element Name</legend>
              <Checks>
                <TextBox aria-label="Element Name" $width="100%" $height={19} $align="left" defaultValue="syn_scalebar" />
              </Checks>
            </Group>
          </Column>
        </TabPanel>
        <Actions>
          <Action $primary>OK</Action>
          <Action>Abbrechen</Action>
          <Action disabled>Übernehmen</Action>
        </Actions>
      </DialogBody>
    </Dialog>
  );
}

const menus = ["File", "Edit", "View", "Bookmarks", "Insert", "Selection", "Geoprocessing", "Customize", "Windows", "Help"];

export default function App() {
  return (
    <Frame>
      <GlobalStyle />
      <TitleBar>
        <Icon name="app" size={15} />
        <Title>WebOffice_plot_author.mxd - ArcMap</Title>
        <WindowButtons>
          <WindowButton aria-label="Minimize">
            <Svg width="9" height="9"><path d="M1 7h7" stroke="#111" strokeWidth="2" /></Svg>
          </WindowButton>
          <WindowButton aria-label="Maximize">
            <Svg width="9" height="9"><path d="M.5 1.500h8v6h-8zM.5 2.500h8" stroke="#111" /></Svg>
          </WindowButton>
          <WindowButton $close aria-label="Close">
            <Svg width="7" height="7"><path d="M1 1l5 5M6 1L1 6" stroke="#fff" strokeWidth="1.500" /></Svg>
          </WindowButton>
        </WindowButtons>
      </TitleBar>
      <Shell>
        <MenuBar>
          {menus.map((menu) => (
            <MenuItem key={menu}>{menu}</MenuItem>
          ))}
        </MenuBar>
        <ToolRow $gap={4}>
          {topRow.map((bar) => (
            <ToolStrip key={bar.width} {...bar} />
          ))}
        </ToolRow>
        <ToolRow $gap={34}>
          <ToolStrip {...bottomRow[0]} />
          <ToolRow $gap={24}>
            <ToolStrip {...bottomRow[1]} />
            <ToolStrip {...bottomRow[2]} />
          </ToolRow>
        </ToolRow>
        <Workspace>
          <Contents>
            <PanelHead>
              <h2>Table Of Contents</h2>
              <PanelButton aria-label="Auto hide">
                <Svg width="8" height="9"><path d="M2.500 .5h3v4h-3zM1 4.500h6M4 5v4M5 1v3" stroke="#111" /></Svg>
              </PanelButton>
              <PanelButton aria-label="Close panel">
                <Svg width="8" height="8"><path d="M1 1l6 6M7 1L1 7" stroke="#111" strokeWidth="1.500" /></Svg>
              </PanelButton>
            </PanelHead>
            <PanelTools>
              <Tool $active aria-label="List by drawing order"><Icon name="drawingOrder" /></Tool>
              <Tool aria-label="List by source"><Icon name="source" /></Tool>
              <Tool aria-label="List by visibility"><Icon name="visibility" /></Tool>
              <Tool aria-label="List by selection"><Icon name="selection" /></Tool>
              <Divider />
              <Tool aria-label="Options"><Icon name="options" size={13} /></Tool>
            </PanelTools>
            <Tree>
              <TreeItem $bold><Icon name="layers" size={13} />print</TreeItem>
              <TreeItem><Icon name="layers" size={13} />overview</TreeItem>
            </Tree>
          </Contents>
          <LayoutView>
            <RulerCorner />
            <HorizontalRuler />
            <VerticalRuler />
            <Canvas>
              <MapLayout />
            </Canvas>
          </LayoutView>
          <SideStrip>
            <SideTab>
              <Icon name="catalog" size={13} />
              Catalog
            </SideTab>
          </SideStrip>
        </Workspace>
        <StatusBar>
          <Svg width="8" height="8">
            <path d="M6 1h2M3 4h2M6 4h2M0 7h2M3 7h2M6 7h2" stroke="#bbb" strokeWidth="2" />
          </Svg>
        </StatusBar>
      </Shell>
      <PropertiesDialog />
    </Frame>
  );
}
